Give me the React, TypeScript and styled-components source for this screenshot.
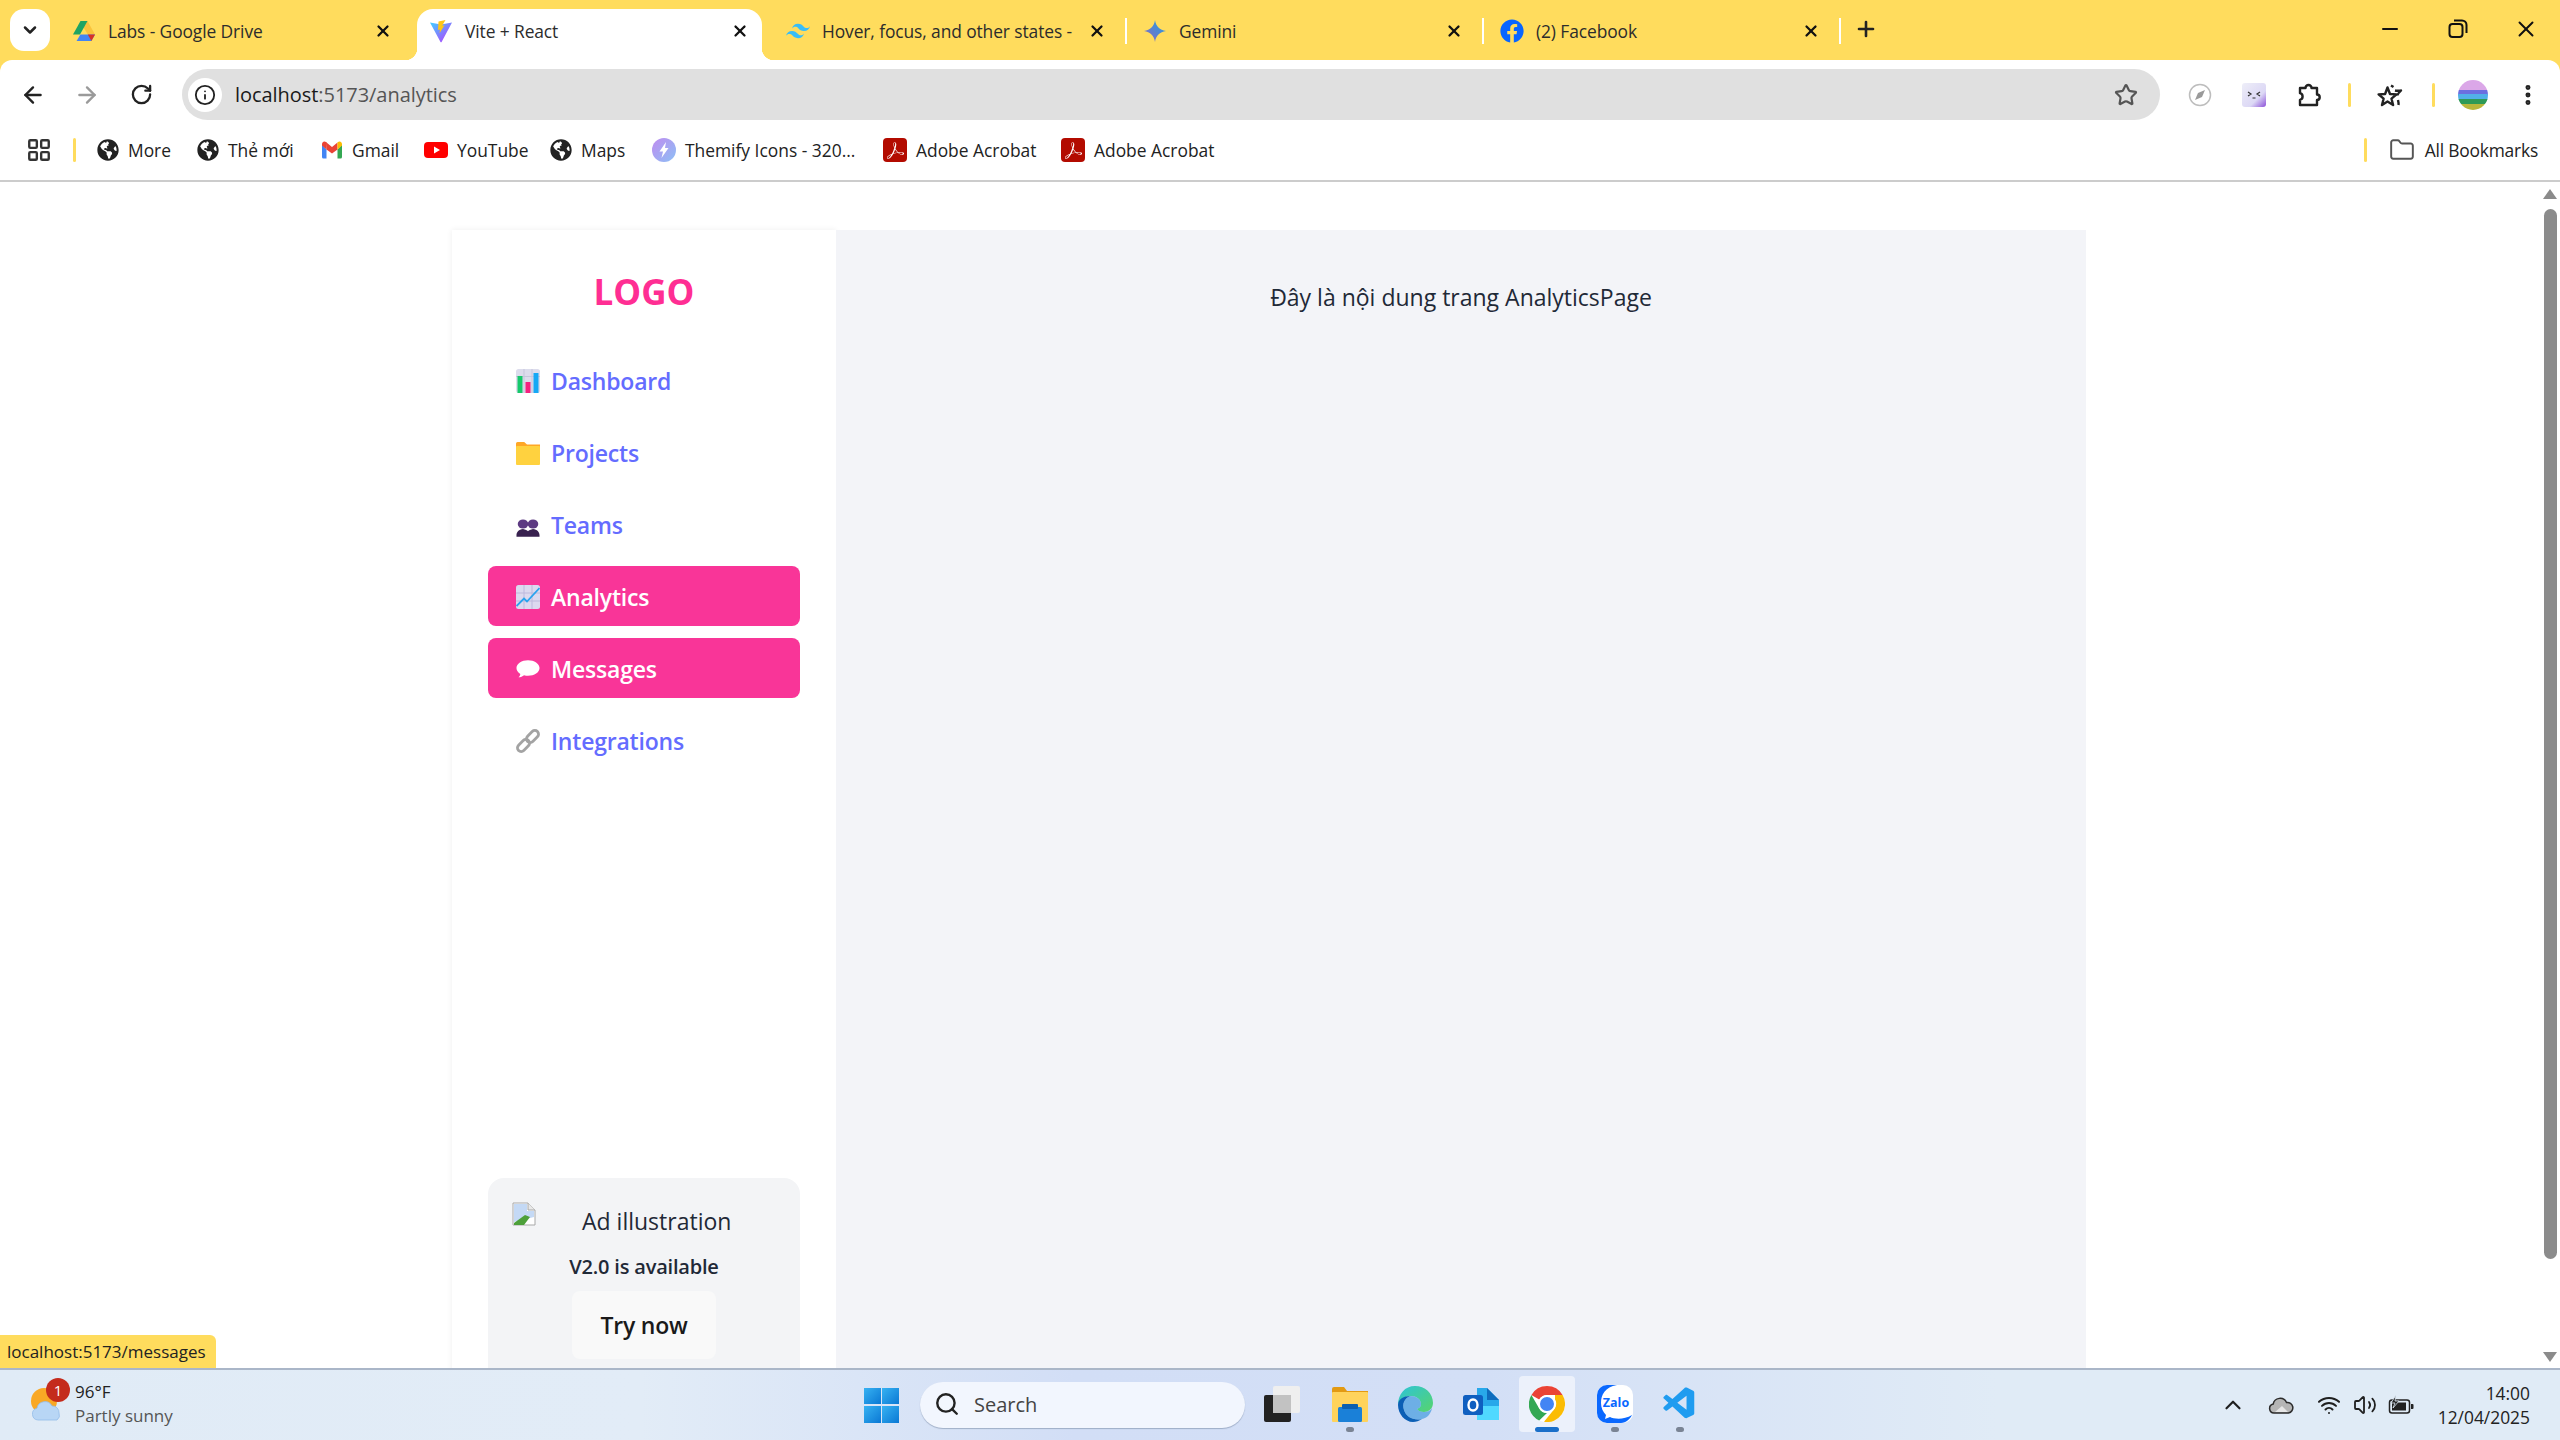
import React from "react";
import styled, { createGlobalStyle } from "styled-components";
import {
  ArrowLeft,
  ArrowRight,
  ChevronDown,
  ChevronUp,
  EllipsisVertical,
  Folder,
  Info,
  LayoutGrid,
  Minus,
  Plus,
  RotateCw,
  Search,
  Star,
  Volume2,
  Wifi,
  X,
} from "lucide-react";
import { FaFacebook, FaGlobeAmericas } from "react-icons/fa";
import { SiAdobeacrobatreader, SiTailwindcss } from "react-icons/si";
import { VscVscode } from "react-icons/vsc";

const YELLOW = "#ffdc5d";
const UI_FONT = `"Open Sans", "Noto Sans", sans-serif`;

const GlobalStyle = createGlobalStyle`
  html, body {
    margin: 0;
    padding: 0;
    height: 100%;
    overflow: hidden;
    background: #fff;
  }
  body {
    font-family: ${UI_FONT};
    color: #1f2937;
  }
  * { box-sizing: border-box; }
`;

const Screen = styled.div`
  width: 2560px;
  height: 1440px;
  display: flex;
  flex-direction: column;
  background: #fff;
`;

const TabStrip = styled.div`
  height: 60px;
  flex-shrink: 0;
  display: flex;
  align-items: flex-end;
  background: ${YELLOW};
  padding-left: 10px;
`;

const TabSearch = styled.div`
  width: 40px;
  height: 42px;
  margin-bottom: 9px;
  margin-right: 10px;
  border-radius: 14px;
  background: #fff;
  display: flex;
  align-items: center;
  justify-content: center;
`;

const Tab = styled.div<{ $active?: boolean }>`
  position: relative;
  width: 345px;
  height: 51px;
  margin-right: 12px;
  padding: 0 12px 7px;
  display: flex;
  align-items: center;
  gap: 12px;
  border-radius: 16px 16px 0 0;
  background: ${({ $active }) => ($active ? "#fff" : "transparent")};

  &::before,
  &::after {
    content: "";
    position: absolute;
    bottom: 0;
    width: 12px;
    height: 12px;
    display: ${({ $active }) => ($active ? "block" : "none")};
  }
  &::before {
    left: -12px;
    background: radial-gradient(circle at 0 0, transparent 12px, #fff 12.5px);
  }
  &::after {
    right: -12px;
    background: radial-gradient(circle at 100% 0, transparent 12px, #fff 12.5px);
  }
`;

const TabSeparator = styled.span`
  position: absolute;
  right: -8px;
  top: 9px;
  width: 2px;
  height: 26px;
  background: #fff;
`;

const Favicon = styled.span`
  width: 24px;
  height: 24px;
  flex-shrink: 0;
  display: flex;
  align-items: center;
  justify-content: center;
`;

const TabTitle = styled.span`
  flex: 1;
  min-width: 0;
  font-size: 17.4px;
  letter-spacing: -0.1px;
  line-height: 24px;
  color: #2c2c2c;
  white-space: nowrap;
`;

const TabClose = styled.span`
  width: 20px;
  height: 20px;
  flex-shrink: 0;
  display: flex;
  align-items: center;
  justify-content: center;
  color: #111;
`;

const NewTab = styled.div`
  width: 24px;
  height: 51px;
  margin-left: 9px;
  padding-bottom: 11px;
  display: flex;
  align-items: center;
  justify-content: center;
  color: #222;
`;

const WindowControls = styled.div`
  margin-left: auto;
  height: 60px;
  display: flex;
  align-items: center;
`;

const WindowButton = styled.div<{ $w: number }>`
  width: ${({ $w }) => $w}px;
  height: 60px;
  display: flex;
  align-items: center;
  justify-content: center;
  padding-bottom: 2px;
  color: #111;
`;

const ChromeBody = styled.div`
  background: ${YELLOW};
  flex-shrink: 0;
`;

const Toolbar = styled.div`
  height: 60px;
  background: #fff;
  border-radius: 12px 12px 0 0;
  display: flex;
  padding: 9px 0 0 6px;
`;

const NavButton = styled.div<{ $off?: boolean }>`
  width: 54px;
  height: 51px;
  display: flex;
  align-items: center;
  justify-content: center;
  color: ${({ $off }) => ($off ? "#9a9a9a" : "#222")};
`;

const Omnibox = styled.div`
  width: 1978px;
  height: 51px;
  margin-left: 14px;
  padding: 0 22px 0 6px;
  border-radius: 26px;
  background: #e0e0e0;
  display: flex;
  align-items: center;
`;

const InfoChip = styled.div`
  width: 34px;
  height: 34px;
  border-radius: 50%;
  background: #fff;
  display: flex;
  align-items: center;
  justify-content: center;
  color: #222;
`;

const UrlText = styled.div`
  margin-left: 13px;
  flex: 1;
  font-size: 20px;
  letter-spacing: -0.05px;
  color: #555;
  span {
    color: #1a1a1a;
  }
`;

const ToolGroup = styled.div`
  padding-left: 13px;
  display: flex;
  height: 51px;
`;

const ToolSlot = styled.div<{ $w: number }>`
  width: ${({ $w }) => $w}px;
  height: 51px;
  display: flex;
  align-items: center;
  justify-content: center;
  color: #222;
`;

const Divider = styled.span`
  width: 3px;
  height: 24px;
  border-radius: 2px;
  background: ${YELLOW};
`;

const BookmarkBar = styled.div`
  height: 62px;
  flex-shrink: 0;
  background: #fff;
  border-bottom: 2px solid #cccccc;
  display: flex;
  align-items: center;
`;

const AppsButton = styled.div`
  width: 73px;
  padding-left: 26px;
  color: #333;
  display: flex;
`;

const BookmarkDivider = styled(Divider)`
  margin-right: 21px;
`;

const Bookmark = styled.div<{ $w: number }>`
  width: ${({ $w }) => $w}px;
  display: flex;
  align-items: center;
  gap: 9px;
  font-size: 17.4px;
  color: #222;
  white-space: nowrap;
  flex-shrink: 0;
`;

const BookmarkEnd = styled.div`
  margin-left: auto;
  padding-right: 22px;
  display: flex;
  align-items: center;
  font-size: 17.4px;
  letter-spacing: -0.2px;
  color: #222;
  gap: 10px;
`;

const EndDivider = styled(Divider)`
  margin-right: 12px;
`;

const PageRow = styled.div`
  flex: 1;
  min-height: 0;
  display: flex;
  position: relative;
`;

const Viewport = styled.div`
  flex: 1;
  min-width: 0;
  overflow: hidden;
  padding: 48px 0 0 452px;
  display: flex;
`;

const Shell = styled.div`
  width: 1634px;
  height: 1240px;
  display: flex;
  flex-shrink: 0;
`;

const Sidebar = styled.aside`
  width: 384px;
  flex-shrink: 0;
  padding: 0 36px;
  background: #fff;
  box-shadow: 0 0 6px rgba(0, 0, 0, 0.07);
  display: flex;
  flex-direction: column;
`;

const Logo = styled.div`
  height: 120px;
  padding-top: 3px;
  display: flex;
  align-items: center;
  justify-content: center;
  font-size: 35px;
  font-weight: 700;
  color: #ff2e93;
`;

const NavList = styled.nav`
  display: flex;
  flex-direction: column;
  gap: 12px;
`;

const NavItem = styled.a<{ $active?: boolean }>`
  height: 60px;
  padding: 1px 0 0 28px;
  display: flex;
  align-items: center;
  gap: 11px;
  border-radius: 8px;
  font-size: 23px;
  font-weight: 600;
  letter-spacing: -0.2px;
  background: ${({ $active }) => ($active ? "#f93598" : "transparent")};
  color: ${({ $active }) => ($active ? "#fff" : "#646cff")};
`;

const NavIcon = styled.span`
  width: 24px;
  height: 24px;
  display: flex;
  flex-shrink: 0;
`;

const AdCard = styled.div`
  margin-top: 408px;
  padding: 24px 0 40px;
  border-radius: 16px;
  background: #f3f4f6;
  display: flex;
  flex-direction: column;
  align-items: center;
`;

const AdImage = styled.div`
  width: 100%;
  height: 47px;
  padding-left: 24px;
  display: flex;
  font-size: 23px;
  color: #1f2937;
`;

const AdAlt = styled.span`
  margin-left: 46px;
  line-height: 39px;
`;

const AdTitle = styled.div`
  margin-top: 2px;
  height: 36px;
  line-height: 32px;
  font-size: 20px;
  font-weight: 600;
  letter-spacing: -0.2px;
  color: #1f2937;
`;

const TryButton = styled.button`
  margin-top: 4px;
  width: 144px;
  height: 68px;
  border: none;
  border-radius: 8px;
  background: #f9f9f9;
  font-family: inherit;
  font-size: 23px;
  font-weight: 600;
  letter-spacing: -0.2px;
  color: #1a1a1a;
`;

const Main = styled.main`
  flex: 1;
  position: relative;
  background: #f3f4f8;
  padding-top: 48px;
  text-align: center;
  font-size: 23px;
  line-height: 39px;
  color: #1f2937;
`;

const ScrollTrack = styled.div`
  width: 20px;
  flex-shrink: 0;
  padding-top: 7px;
  display: flex;
  flex-direction: column;
  align-items: center;
  background: #fff;
`;

const ArrowUp = styled.span`
  width: 0;
  height: 0;
  border-left: 7px solid transparent;
  border-right: 7px solid transparent;
  border-bottom: 10px solid #8b8b8b;
`;

const ArrowDown = styled.span`
  width: 0;
  height: 0;
  margin-top: auto;
  margin-bottom: 6px;
  border-left: 7px solid transparent;
  border-right: 7px solid transparent;
  border-top: 10px solid #8b8b8b;
`;

const Thumb = styled.div`
  margin-top: 10px;
  width: 13px;
  height: 1050px;
  border-radius: 7px;
  background: #8b8b8b;
`;

const StatusBubble = styled.div`
  position: absolute;
  left: 0;
  bottom: 0;
  height: 33px;
  width: 216px;
  padding-left: 7px;
  border-radius: 0 6px 0 0;
  background: ${YELLOW};
  font-size: 17px;
  line-height: 33px;
  color: #222;
  white-space: nowrap;
`;

const Taskbar = styled.footer`
  height: 72px;
  flex-shrink: 0;
  border-top: 2px solid #aab6c8;
  background: linear-gradient(90deg, #e0ebf6 0%, #e2ecf7 25%, #d2def6 42%, #d3dff6 58%, #e0ebf6 78%, #e0ebf6 100%);
  display: flex;
  align-items: center;
`;

const Weather = styled.div`
  width: 75px;
  height: 70px;
  padding-left: 30px;
  position: relative;
  display: flex;
  align-items: center;
  flex-shrink: 0;
`;

const Badge = styled.span`
  position: absolute;
  left: 46px;
  top: 8px;
  width: 24px;
  height: 24px;
  border-radius: 50%;
  background: #c42b1c;
  color: #fff;
  font-size: 15px;
  line-height: 24px;
  text-align: center;
`;

const WeatherText = styled.div`
  width: 789px;
  margin-top: -2px;
  font-size: 17px;
  line-height: 24px;
  color: #222;
  small {
    display: block;
    font-size: 17px;
    color: #555;
  }
`;

const WindowsLogo = styled.div`
  width: 35px;
  height: 35px;
  display: grid;
  grid-template-columns: 1fr 1fr;
  gap: 1.5px;
  flex-shrink: 0;
  span {
    background: linear-gradient(135deg, #37b2f2, #0a78d4);
  }
`;

const SearchPill = styled.div`
  width: 325px;
  height: 46px;
  margin-left: 21px;
  padding: 0 0 2px 14px;
  border-radius: 23px;
  background: #f2f6fe;
  box-shadow: 0 1px 1px rgba(80, 100, 130, 0.4);
  display: flex;
  align-items: center;
  gap: 14px;
  font-size: 20px;
  color: #444;
  flex-shrink: 0;
`;

const TaskIcons = styled.div`
  margin-left: 6px;
  display: flex;
  height: 70px;
  align-items: flex-start;
`;

const TaskSlot = styled.div<{ $active?: boolean; $open?: boolean; $w: number }>`
  position: relative;
  width: ${({ $w }) => $w}px;
  height: 56px;
  margin-top: 6px;
  border-radius: 4px;
  display: flex;
  align-items: center;
  justify-content: center;
  background: ${({ $active }) => ($active ? "rgba(255,255,255,.55)" : "transparent")};

  &::after {
    content: "";
    position: absolute;
    display: ${({ $active, $open }) => ($active || $open ? "block" : "none")};
    bottom: 0;
    left: 50%;
    transform: translateX(-50%);
    height: 5px;
    width: ${({ $active }) => ($active ? "24px" : "8px")};
    border-radius: 3px;
    background: ${({ $active }) => ($active ? "#1a6fc9" : "#7a8494")};
  }
`;

const Tray = styled.div`
  margin-left: auto;
  display: flex;
  align-items: center;
  color: #1f1f1f;
`;

const TraySlot = styled.div<{ $w: number }>`
  width: ${({ $w }) => $w}px;
  display: flex;
  justify-content: center;
`;

const Clock = styled.div`
  width: 135px;
  padding-right: 30px;
  font-size: 17.4px;
  line-height: 24px;
  text-align: right;
  white-space: nowrap;
  color: #222;
`;

const AcrobatBadge = styled.span`
  width: 24px;
  height: 24px;
  border-radius: 4px;
  background: #b30b00;
  color: #fff;
  display: flex;
  align-items: center;
  justify-content: center;
`;

const DriveIcon = () => (
  <svg width="24" height="24" viewBox="0 0 24 24">
    <path d="M15.500 2 23 15.500h-7.200L11 7.500z" fill="#f9c33c" />
    <path d="M8.500 2h7L8 15.500H1z" fill="#1fa463" />
    <path d="M4.600 22h14.800l3.600-6.500H8.400z" fill="#4285f4" />
    <path d="M15.800 15.500H23L19.400 22z" fill="#d93025" />
  </svg>
);

const ViteIcon = () => (
  <svg width="24" height="24" viewBox="0 0 24 24">
    <defs>
      <linearGradient id="viteA" x1="0" y1="0" x2="1" y2="1">
        <stop offset="0" stopColor="#41d1ff" />
        <stop offset="1" stopColor="#bd34fe" />
      </linearGradient>
    </defs>
    <path d="M1 3.500 12 5.500 23 3.500 12.600 23a.6.6 0 0 1-1.100 0z" fill="url(#viteA)" />
    <path d="M16.500 1 9.500 2.400 9 11l2-.4-.5 3.700 5-8-2.400.5z" fill="#ffc517" />
  </svg>
);

const GeminiIcon = () => (
  <svg width="24" height="24" viewBox="0 0 24 24">
    <defs>
      <linearGradient id="gemA" x1="0" y1="1" x2="1" y2="0">
        <stop offset="0" stopColor="#9168c0" />
        <stop offset="0.5" stopColor="#5684d1" />
        <stop offset="1" stopColor="#1ba1e3" />
      </linearGradient>
    </defs>
    <path d="M12 1c.8 6 4.800 10.200 11 11-6.200.8-10.200 5-11 11-.8-6-4.800-10.200-11-11C7.200 11.200 11.200 7 12 1z" fill="url(#gemA)" />
  </svg>
);

const GmailIcon = () => (
  <svg width="22" height="22" viewBox="0 0 22 22">
    <path d="M1 5.500V18a1.500 1.500 0 0 0 1.500 1.500H5.500V10.500z" fill="#4285f4" />
    <path d="M21 5.500V18a1.500 1.500 0 0 1-1.500 1.500h-3v-9z" fill="#34a853" />
    <path d="M5.500 10.500 1 6.500V5a2.500 2.500 0 0 1 4-2l1 .8z" fill="#ea4335" />
    <path d="M5.500 3.500 11 8l5.500-4.500v7L11 14.500l-5.500-4z" fill="#ea4335" />
    <path d="M16.500 3.500 17 3a2.500 2.500 0 0 1 4 2v1.500l-4.500 4z" fill="#fbbc04" />
  </svg>
);

const YoutubeIcon = () => (
  <svg width="24" height="22" viewBox="0 0 24 22">
    <rect y="3" width="24" height="16" rx="4" fill="#f00" />
    <path d="M10 7.500v7l6-3.500z" fill="#fff" />
  </svg>
);

const ThemifyIcon = () => (
  <svg width="24" height="24" viewBox="0 0 24 24">
    <defs>
      <linearGradient id="thA" x1="0" y1="0" x2="1" y2="1">
        <stop offset="0" stopColor="#c08cf0" />
        <stop offset="1" stopColor="#8cc0f5" />
      </linearGradient>
    </defs>
    <circle cx="12" cy="12" r="12" fill="url(#thA)" />
    <path d="M14 4 7.500 13.500H11L9.500 20l7-10H13z" fill="#fff" />
  </svg>
);

const AcrobatIcon = () => (
  <AcrobatBadge>
    <SiAdobeacrobatreader size={17} />
  </AcrobatBadge>
);

const DashboardIcon = () => (
  <svg width="24" height="24" viewBox="0 0 24 24">
    <rect width="24" height="24" rx="2.500" fill="#dcdcec" />
    <path d="M0 7.500h24M8 0v24M16 0v24" stroke="#c6c6dc" strokeWidth="1" />
    <rect x="1.500" y="7" width="5" height="17" fill="#16c96c" />
    <rect x="9.500" y="13" width="5" height="11" fill="#f5217f" />
    <rect x="17.500" y="4" width="5" height="20" fill="#16a8f5" />
  </svg>
);

const FolderIcon = () => (
  <svg width="24" height="24" viewBox="0 0 24 24">
    <path d="M0 2.500A1.500 1.500 0 0 1 1.500 1h6.700L11 3.500h13V8H0z" fill="#ffa726" />
    <rect y="5" width="24" height="19" rx="1" fill="#ffd23f" />
  </svg>
);

const TeamIcon = () => (
  <svg width="24" height="24" viewBox="0 0 24 25">
    <g transform="translate(0 5.500) scale(1 .85)">
      <circle cx="6.800" cy="7" r="5.500" fill="#5d3a82" />
      <circle cx="17.200" cy="7" r="5.500" fill="#5d3a82" />
      <path d="M0 21c0-5 2.500-7 6.800-8 2.500.5 4.200 1.500 5.200 3 1-1.500 2.700-2.500 5.200-3 4.300 1 6.800 3 6.800 8v1.500H0z" fill="#38214f" />
    </g>
  </svg>
);

const ChartIcon = () => (
  <svg width="24" height="24" viewBox="0 0 24 24">
    <rect width="24" height="24" rx="2.500" fill="#dcd9ef" />
    <path d="M0 8h24M0 16h24M8 0v24M16 0v24" stroke="#bdb8dc" strokeWidth="1" />
    <path d="M0.500 21 8 13.500l3 3L23.500 3" fill="none" stroke="#2aa3ee" strokeWidth="1.800" />
  </svg>
);

const BubbleIcon = () => (
  <svg width="26" height="24" viewBox="0 0 26 24">
    <path d="M13 2.500C6.200 2.500 0.500 6.200 0.500 11c0 2.600 1.600 4.800 4.200 6.300-.2 1.500-1 2.700-2 3.700 2.400 0 4.400-.9 6-2.200 1.400.4 2.900.6 4.300.6 6.800 0 12.500-3.600 12.500-8.400S19.800 2.500 13 2.500z" fill="#fff" />
  </svg>
);

const LinkIcon = () => (
  <svg width="24" height="24" viewBox="0 0 24 24" fill="none">
    <rect x="-7" y="-3.700" width="14" height="7.400" rx="3.700" transform="translate(7.500 16.500) rotate(-45)" stroke="#a3a3a3" strokeWidth="2.800" />
    <rect x="-7" y="-3.700" width="14" height="7.400" rx="3.700" transform="translate(16.500 7.500) rotate(-45)" stroke="#a3a3a3" strokeWidth="2.800" />
  </svg>
);

const BrokenImage = () => (
  <svg width="24" height="24" viewBox="0 0 24 24">
    <path d="M1 1h15l7 7v15H1z" fill="#fff" stroke="#a8a8a8" strokeWidth="1" />
    <path d="M2 2h13v7h7v6L2 20z" fill="#c4d9f5" />
    <path d="M2 23v-2l11-8 5 2-6 8z" fill="#4da03a" />
    <path d="M16 1v7h7" fill="#e8e8e8" stroke="#a8a8a8" strokeWidth="1" />
  </svg>
);

const CompassIcon = () => (
  <svg width="24" height="24" viewBox="0 0 24 24">
    <circle cx="12" cy="12" r="10.500" fill="#fff" stroke="#bdbdbd" strokeWidth="1.500" />
    <path d="M17 7l-7 3-3 7 7-3z" fill="#9a9a9a" />
  </svg>
);

const FaceIcon = () => (
  <svg width="24" height="24" viewBox="0 0 24 24">
    <defs>
      <linearGradient id="faceA" x1="0" y1="0" x2="1" y2="1">
        <stop offset="0" stopColor="#eeeef8" />
        <stop offset="0.65" stopColor="#dcd8f5" />
        <stop offset="1" stopColor="#8b4fd8" />
      </linearGradient>
    </defs>
    <rect width="24" height="24" rx="3" fill="url(#faceA)" />
    <path d="M6 9l3 2-3 2M18 9l-3 2 3 2M10.500 15h3" fill="none" stroke="#333" strokeWidth="1.200" />
  </svg>
);

const PuzzleIcon = () => (
  <svg width="26" height="26" viewBox="0 0 26 26" fill="none">
    <path d="M4 6h5.500a3 3 0 0 1 6 0H21v6.500a2.700 2.700 0 0 1 0 5.400V23H4v-5.200a3.400 3.400 0 0 0 0-6.600z" stroke="#222" strokeWidth="2.400" strokeLinejoin="round" />
  </svg>
);

const StarsIcon = () => (
  <svg width="28" height="28" viewBox="0 0 28 28" fill="none" stroke="#222" strokeWidth="2.400" strokeLinejoin="round">
    <path d="M11.500 6.500 14 13l6.500.4-5 4.300 1.600 6.300-5.600-3.500L6 24l1.600-6.300-5-4.300 6.500-.4z" />
    <path d="M15 4.500l2.500 1.500M19 9.500c2 .5 4 .2 6 0-2 2-3.500 3.500-3.500 5M22 19c.5 2 .8 3.500.5 5" />
  </svg>
);

const AvatarIcon = () => (
  <svg width="30" height="30" viewBox="0 0 30 30">
    <defs>
      <clipPath id="avClip">
        <circle cx="15" cy="15" r="15" />
      </clipPath>
    </defs>
    <g clipPath="url(#avClip)">
      <rect width="30" height="11" fill="#dba7e8" />
      <rect y="10" width="30" height="5" fill="#6c6ee0" />
      <rect y="14" width="30" height="6" fill="#52b0e8" />
      <rect y="19" width="30" height="5" fill="#2e9a56" />
      <rect y="24" width="30" height="6" fill="#b9b63a" />
    </g>
  </svg>
);

const WeatherIcon = () => (
  <svg width="36" height="36" viewBox="0 0 36 36">
    <circle cx="14" cy="14" r="13" fill="#f9a825" />
    <path d="M8 33a6 6 0 0 1-1-11.800A8 8 0 0 1 22 19a6.500 6.500 0 0 1 7 7 6 6 0 0 1-2 7z" fill="#b8d6f5" stroke="#93bdea" strokeWidth="0.800" />
  </svg>
);

const TaskViewIcon = () => (
  <svg width="36" height="36" viewBox="0 0 36 36">
    <rect x="9" y="0" width="27" height="27" rx="2" fill="#efefef" />
    <rect x="0" y="9" width="27" height="27" rx="2" fill="#222" />
    <rect x="9" y="9" width="18" height="18" fill="#c2c2c2" />
  </svg>
);

const ExplorerIcon = () => (
  <svg width="36" height="36" viewBox="0 0 36 36">
    <path d="M0 3a2 2 0 0 1 2-2h10l3 4h21v4H0z" fill="#e39a12" />
    <rect y="6" width="36" height="30" rx="1" fill="#ffd35c" />
    <rect x="6" y="21" width="24" height="15" rx="1.500" fill="#1a80d8" />
    <rect x="10" y="18" width="16" height="5" rx="1" fill="#0a5fb0" />
  </svg>
);

const EdgeIcon = () => (
  <svg width="36" height="38" viewBox="0 0 36 38">
    <defs>
      <linearGradient id="edgeA" x1="0" y1="0" x2="1" y2="1">
        <stop offset="0" stopColor="#2dc4d8" />
        <stop offset="1" stopColor="#57d46c" />
      </linearGradient>
    </defs>
    <path d="M18 1C28 1 36 8 36 18c0 6-5 9-9 9-3 0-6-1-7-3 3-1 4-3 4-5 0-5-5-8-10-8C8 11 3 14 1 20 1 9 8 1 18 1z" fill="url(#edgeA)" />
    <path d="M1 20c0-6 6-9 12-9-6 3-8 8-6 14 2 7 10 11 18 9-3 2-6 3-9 3C8 37 1 29 1 20z" fill="#0c5fb5" />
    <path d="M13 11c6 0 11 3 11 8 0 2-1 4-4 5 1 2 4 3 7 3 3 0 6-1 8-4-1 6-5 10-10 11-8 2-16-2-18-9-2-6 0-11 6-14z" fill="#1a86d8" opacity="0.55" />
  </svg>
);

const OutlookIcon = () => (
  <svg width="36" height="36" viewBox="0 0 36 36">
    <path d="M14 2h10l12 12v20H14z" fill="#28a8ea" />
    <path d="M24 2 36 14H24z" fill="#0f6cbd" />
    <path d="M14 20h22v14H14z" fill="#50d9ff" />
    <rect x="0" y="9" width="20" height="20" rx="2.500" fill="#0f5fc0" />
    <ellipse cx="10" cy="19" rx="4.500" ry="5.500" fill="none" stroke="#fff" strokeWidth="2.400" />
  </svg>
);

const ChromeIcon = () => (
  <svg width="36" height="36" viewBox="0 0 36 36">
    <circle cx="18" cy="18" r="18" fill="#fff" />
    <path d="M18 0a18 18 0 0 1 15.600 9H18a9 9 0 0 0-7.800 4.500L2.400 9A18 18 0 0 1 18 0z" fill="#ea4335" />
    <path d="M2.400 9l7.800 13.500A9 9 0 0 0 18 27l-7.800 7.600A18 18 0 0 1 2.400 9z" fill="#34a853" />
    <path d="M33.600 9A18 18 0 0 1 15 35.800L25.800 22.500A9 9 0 0 0 26 13.500V9z" fill="#fbbc04" />
    <circle cx="18" cy="18" r="8" fill="#4285f4" stroke="#fff" strokeWidth="2" />
  </svg>
);

const ZaloIcon = () => (
  <svg width="36" height="38" viewBox="0 0 36 38">
    <path d="M10 0h16a10 10 0 0 1 10 10v18a10 10 0 0 1-10 10H10A10 10 0 0 1 0 28V10A10 10 0 0 1 10 0z" fill="#fff" />
    <path d="M10 0h10C8 2 4 10 4 18c0 5 2 9 5 12l-1 4 5-2c4 2 14 3 22-2-2 4-6 8-11 8H10A10 10 0 0 1 0 28V10A10 10 0 0 1 10 0z" fill="#0a68ff" />
    <text x="19" y="22" fontSize="12.500" fontWeight="700" fontFamily="Open Sans, sans-serif" textAnchor="middle" fill="#0a68ff">
      Zalo
    </text>
  </svg>
);

const TrayCloud = () => (
  <svg width="26" height="20" viewBox="0 0 26 20">
    <path d="M6 18a4.500 4.500 0 0 1-.8-8.900A7 7 0 0 1 18.500 7.500 5.300 5.300 0 0 1 20.500 18z" fill="#b5b5b5" stroke="#2b2b2b" strokeWidth="1.500" />
    <path d="M7 17l7-6 6 6z" fill="#e6e6e6" />
  </svg>
);

const TrayBattery = () => (
  <svg width="26" height="20" viewBox="0 0 26 20" fill="none">
    <rect x="1.500" y="5" width="20" height="13" rx="2.500" stroke="#222" strokeWidth="1.500" />
    <rect x="4" y="7.500" width="14" height="8" fill="#222" />
    <path d="M23 9h1.500a1 1 0 0 1 1 1v3a1 1 0 0 1-1 1H23z" fill="#222" />
    <path d="M8 0 3 8h4l-2 5 6-7H7z" fill="#222" stroke="#e0ebf6" strokeWidth="0.800" />
  </svg>
);

const tabs = [
  { title: "Labs - Google Drive", icon: <DriveIcon /> },
  { title: "Vite + React", icon: <ViteIcon />, active: true },
  { title: "Hover, focus, and other states -", icon: <SiTailwindcss size={24} color="#38bdf8" />, sep: true },
  { title: "Gemini", icon: <GeminiIcon />, sep: true },
  { title: "(2) Facebook", icon: <FaFacebook size={24} color="#0866ff" />, sep: true },
];

const globe = <FaGlobeAmericas size={22} color="#222" />;

const bookmarks = [
  { label: "More", icon: globe, w: 100 },
  { label: "Thẻ mới", icon: globe, w: 124 },
  { label: "Gmail", icon: <GmailIcon />, w: 103 },
  { label: "YouTube", icon: <YoutubeIcon />, w: 126 },
  { label: "Maps", icon: globe, w: 102 },
  { label: "Themify Icons - 320...", icon: <ThemifyIcon />, w: 231 },
  { label: "Adobe Acrobat", icon: <AcrobatIcon />, w: 178 },
  { label: "Adobe Acrobat", icon: <AcrobatIcon />, w: 178 },
];

const navItems = [
  { label: "Dashboard", icon: <DashboardIcon /> },
  { label: "Projects", icon: <FolderIcon /> },
  { label: "Teams", icon: <TeamIcon /> },
  { label: "Analytics", icon: <ChartIcon />, active: true },
  { label: "Messages", icon: <BubbleIcon />, active: true },
  { label: "Integrations", icon: <LinkIcon /> },
];

const App = () => {
  return (
    <Screen>
      <GlobalStyle />
      <TabStrip>
        <TabSearch>
          <ChevronDown size={20} strokeWidth={3} color="#222" />
        </TabSearch>
        {tabs.map((tab) => (
          <Tab key={tab.title} $active={tab.active}>
            <Favicon>{tab.icon}</Favicon>
            <TabTitle>{tab.title}</TabTitle>
            <TabClose>
              <X size={18} strokeWidth={3} />
            </TabClose>
            {tab.sep ? <TabSeparator /> : null}
          </Tab>
        ))}
        <NewTab>
          <Plus size={24} strokeWidth={2.6} />
        </NewTab>
        <WindowControls>
          <WindowButton $w={68}>
            <Minus size={24} strokeWidth={2} />
          </WindowButton>
          <WindowButton $w={68}>
            <svg width="20" height="20" viewBox="0 0 20 20" fill="none" stroke="#111" strokeWidth="2">
              <rect x="1.500" y="5" width="13" height="13" rx="3" />
              <path d="M6 1.500h8a4.500 4.500 0 0 1 4.500 4.500v8" />
            </svg>
          </WindowButton>
          <WindowButton $w={68}>
            <X size={26} strokeWidth={1.8} />
          </WindowButton>
        </WindowControls>
      </TabStrip>
      <ChromeBody>
        <Toolbar>
          <NavButton>
            <ArrowLeft size={26} strokeWidth={2.2} />
          </NavButton>
          <NavButton $off>
            <ArrowRight size={26} strokeWidth={2.2} />
          </NavButton>
          <NavButton>
            <RotateCw size={23} strokeWidth={2.4} />
          </NavButton>
          <Omnibox>
            <InfoChip>
              <Info size={22} strokeWidth={2} />
            </InfoChip>
            <UrlText>
              <span>localhost</span>:5173/analytics
            </UrlText>
            <Star size={24} strokeWidth={2.2} color="#555" />
          </Omnibox>
          <ToolGroup>
            <ToolSlot $w={54}>
              <CompassIcon />
            </ToolSlot>
            <ToolSlot $w={54}>
              <FaceIcon />
            </ToolSlot>
            <ToolSlot $w={56}>
              <PuzzleIcon />
            </ToolSlot>
            <ToolSlot $w={24}>
              <Divider />
            </ToolSlot>
            <ToolSlot $w={58}>
              <StarsIcon />
            </ToolSlot>
            <ToolSlot $w={28}>
              <Divider />
            </ToolSlot>
            <ToolSlot $w={52}>
              <AvatarIcon />
            </ToolSlot>
            <ToolSlot $w={58}>
              <EllipsisVertical size={26} strokeWidth={2.6} />
            </ToolSlot>
          </ToolGroup>
        </Toolbar>
      </ChromeBody>
      <BookmarkBar>
        <AppsButton>
          <LayoutGrid size={26} strokeWidth={2.2} />
        </AppsButton>
        <BookmarkDivider />
        {bookmarks.map((b, i) => (
          <Bookmark key={i} $w={b.w}>
            {b.icon}
            {b.label}
          </Bookmark>
        ))}
        <BookmarkEnd>
          <EndDivider />
          <Folder size={26} strokeWidth={1.8} color="#555" />
          All Bookmarks
        </BookmarkEnd>
      </BookmarkBar>
      <PageRow>
        <Viewport>
          <Shell>
            <Sidebar>
              <Logo>LOGO</Logo>
              <NavList>
                {navItems.map((item) => (
                  <NavItem key={item.label} $active={item.active}>
                    <NavIcon>{item.icon}</NavIcon>
                    {item.label}
                  </NavItem>
                ))}
              </NavList>
              <AdCard>
                <AdImage>
                  <BrokenImage />
                  <AdAlt>Ad illustration</AdAlt>
                </AdImage>
                <AdTitle>V2.0 is available</AdTitle>
                <TryButton>Try now</TryButton>
              </AdCard>
            </Sidebar>
            <Main>Đây là nội dung trang AnalyticsPage</Main>
          </Shell>
        </Viewport>
        <ScrollTrack>
          <ArrowUp />
          <Thumb />
          <ArrowDown />
        </ScrollTrack>
        <StatusBubble>localhost:5173/messages</StatusBubble>
      </PageRow>
      <Taskbar>
        <Weather>
          <WeatherIcon />
          <Badge>1</Badge>
        </Weather>
        <WeatherText>
          96°F
          <small>Partly sunny</small>
        </WeatherText>
        <WindowsLogo>
          <span />
          <span />
          <span />
          <span />
        </WindowsLogo>
        <SearchPill>
          <Search size={26} strokeWidth={2.2} color="#222" />
          Search
        </SearchPill>
        <TaskIcons>
          <TaskSlot $w={62}>
            <TaskViewIcon />
          </TaskSlot>
          <TaskSlot $w={74} $open>
            <ExplorerIcon />
          </TaskSlot>
          <TaskSlot $w={56}>
            <EdgeIcon />
          </TaskSlot>
          <TaskSlot $w={76}>
            <OutlookIcon />
          </TaskSlot>
          <TaskSlot $w={56} $active>
            <ChromeIcon />
          </TaskSlot>
          <TaskSlot $w={80} $open>
            <ZaloIcon />
          </TaskSlot>
          <TaskSlot $w={50} $open>
            <VscVscode size={38} color="#1f9cf0" />
          </TaskSlot>
        </TaskIcons>
        <Tray>
          <TraySlot $w={48}>
            <ChevronUp size={26} strokeWidth={2} />
          </TraySlot>
          <TraySlot $w={48}>
            <TrayCloud />
          </TraySlot>
          <TraySlot $w={48}>
            <Wifi size={24} strokeWidth={2} />
          </TraySlot>
          <TraySlot $w={24}>
            <Volume2 size={24} strokeWidth={1.8} />
          </TraySlot>
          <TraySlot $w={48}>
            <TrayBattery />
          </TraySlot>
          <Clock>
            14:00
            <br />
            12/04/2025
          </Clock>
        </Tray>
      </Taskbar>
    </Screen>
  );
};

export default App;
